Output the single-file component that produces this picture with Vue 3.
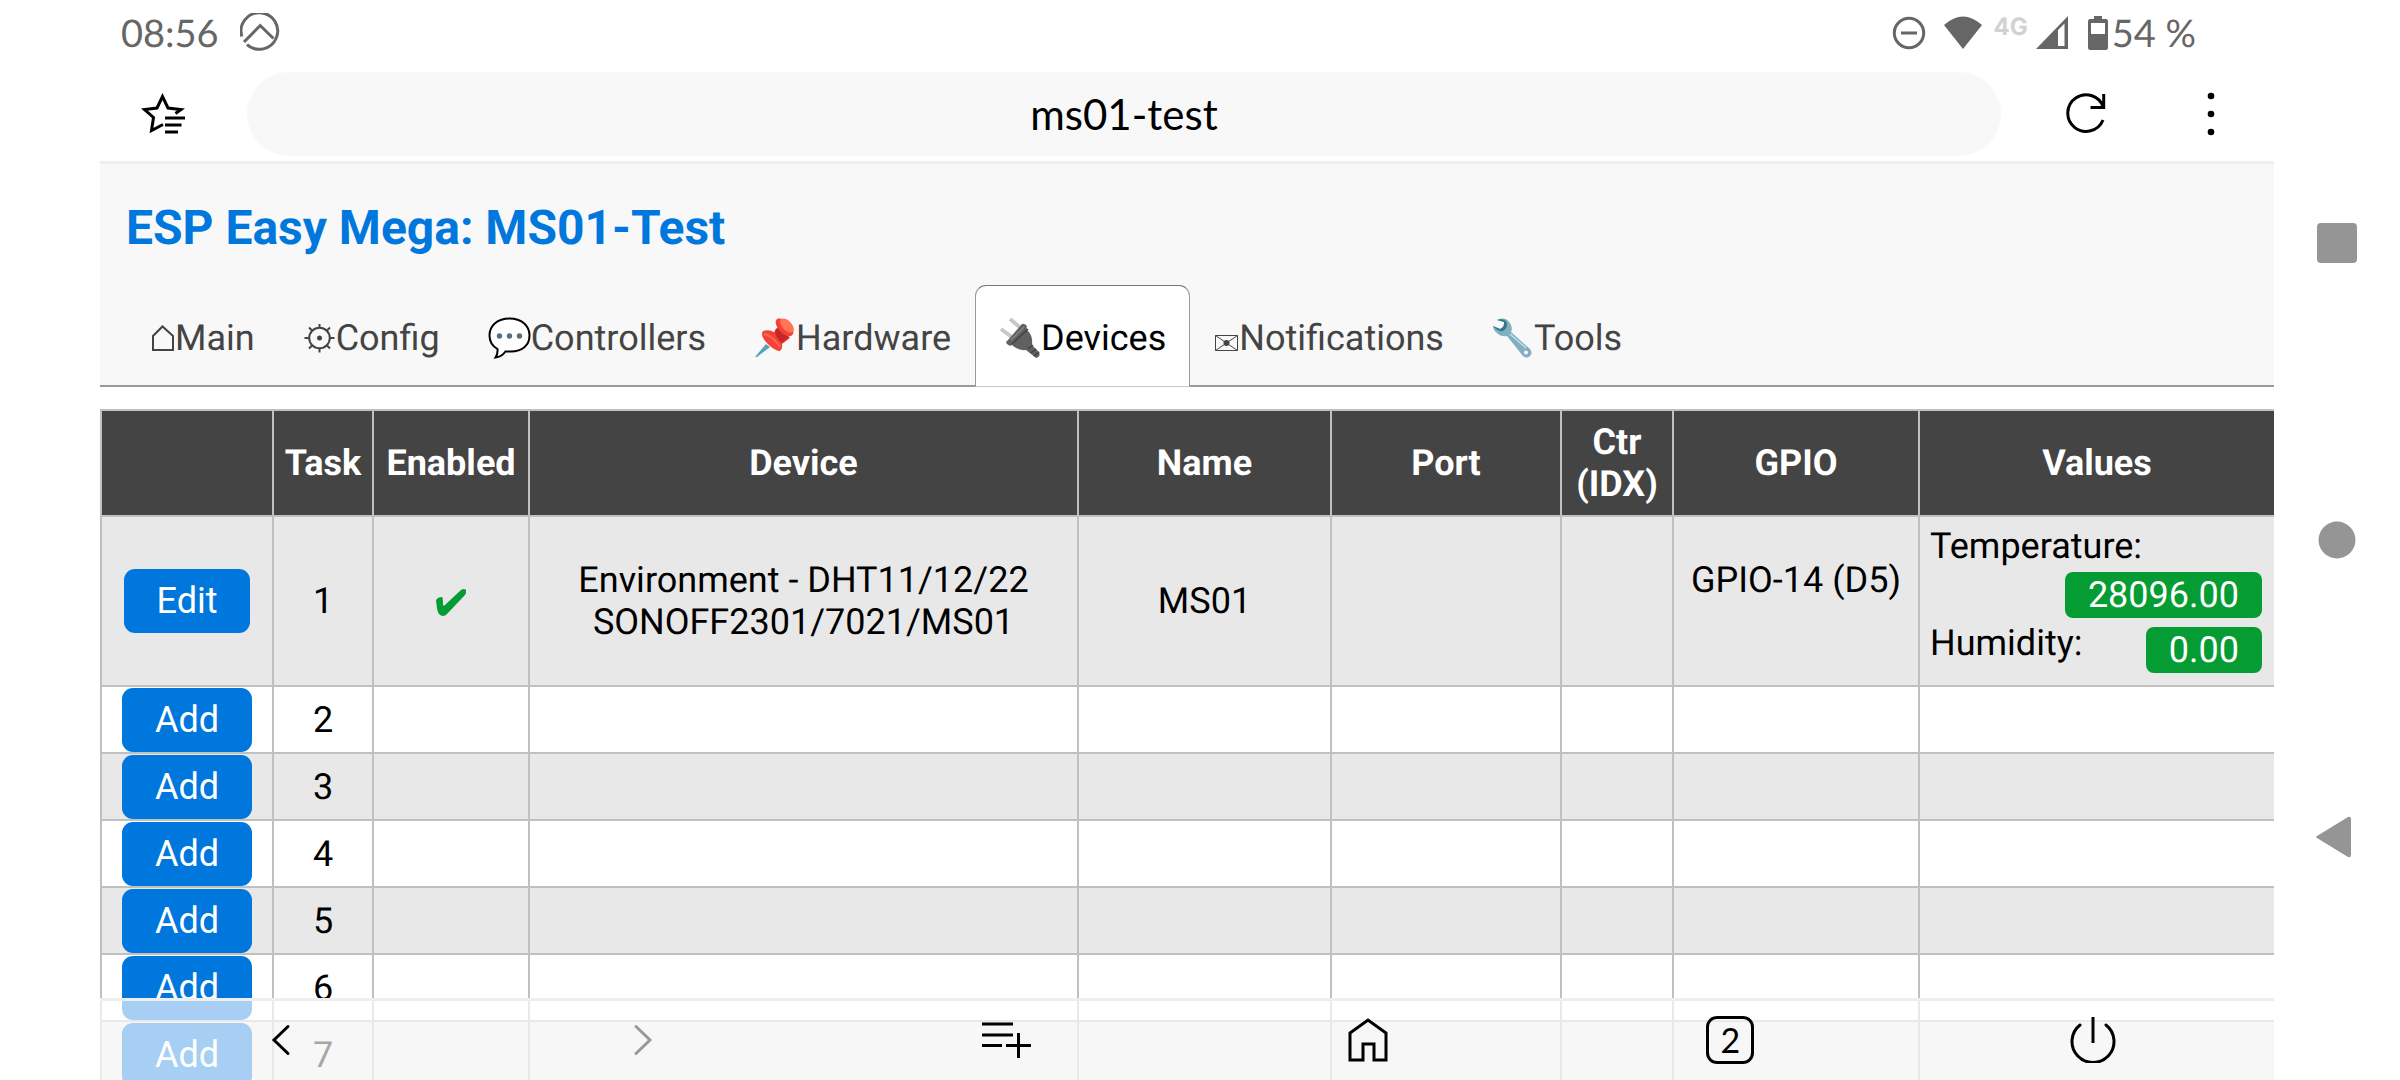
<script setup>
import { ref } from 'vue'

const address = ref('ms01-test')

const tabs = [
  { label: 'Main', icon: 'main' },
  { label: 'Config', icon: 'config' },
  { label: 'Controllers', icon: 'controllers' },
  { label: 'Hardware', icon: 'hardware' },
  { label: 'Devices', icon: 'devices', active: true },
  { label: 'Notifications', icon: 'notifications' },
  { label: 'Tools', icon: 'tools' },
]

const readings = [
  { name: 'Temperature:', value: '28096.00' },
  { name: 'Humidity:', value: '0.00' },
]

const emptyTasks = [2, 3, 4, 5, 6, 7]
</script>

<template>
  <div class="phone">
    <div class="screen">
      <div class="status">
        <span class="clock">08:56</span>
        <svg class="app-badge" width="40" height="40" viewBox="0 0 40 40" fill="none" stroke="#666" stroke-width="3">
          <path d="M1.900 24.500A18.300 18.300 0 1 1 7 32.500M4 30L20.200 13.500L33.500 26.500" transform="translate(0 -1)" />
        </svg>
        <div class="status-right">
          <svg class="dnd" width="34" height="34" viewBox="0 0 34 34" fill="none" stroke="#666" stroke-width="3">
            <circle cx="17" cy="17" r="14.700" /><path d="M9 17H25" />
          </svg>
          <svg class="wifi" width="38" height="34" viewBox="0 0 38 34" fill="#666">
            <path d="M0 9Q19 -8 38 9L19 33Z" />
          </svg>
          <span class="network">4G</span>
          <svg class="signal" width="32" height="34" viewBox="0 0 32 34" fill="#666">
            <path fill-rule="evenodd" d="M0 33L32 0V33ZM22 14V30H28.500V7.500Z" />
          </svg>
          <svg class="battery" width="20" height="34" viewBox="0 0 20 34" fill="#666">
            <path fill-rule="evenodd" d="M6 0H14V3H18Q20 3 20 6V31Q20 34 18 34H2Q0 34 0 31V6Q0 3 2 3H6ZM3 7V18H17V7Z" />
          </svg>
          <span class="percent">54 %</span>
        </div>
      </div>

      <div class="toolbar">
        <button class="tool star" aria-label="Bookmarks">
          <svg width="48" height="42" viewBox="0 0 48 42" fill="none" stroke="#000" stroke-width="3">
            <path d="M24 31.500L12.500 37.500L14.500 24.500L5.500 16.500L18 15L23.500 3.500L29 15L42 16.500L36.500 20.500" />
            <path d="M26 25H46M26 32H42.500M26 39H39" />
          </svg>
        </button>
        <input v-model="address" class="address" type="text" aria-label="Address">
        <button class="tool reload" aria-label="Reload">
          <svg width="40" height="42" viewBox="0 0 40 42" fill="none" stroke="#000" stroke-width="3">
            <path d="M37.500 14.500A18.300 18.300 0 1 0 37 27M37.700 1V14.500H24.500" />
          </svg>
        </button>
        <button class="tool more" aria-label="Menu">
          <svg width="8" height="44" viewBox="0 0 8 44">
            <circle cx="4" cy="4" r="3.300" /><circle cx="4" cy="22" r="3.300" /><circle cx="4" cy="40" r="3.300" />
          </svg>
        </button>
      </div>

      <header class="head">
        <h1>ESP Easy Mega: MS01-Test</h1>
        <nav class="tabs">
          <a v-for="tab in tabs" :key="tab.label" href="#" class="tab" :class="{ active: tab.active }">
            <svg v-if="tab.icon === 'main'" width="26" height="42" viewBox="0 0 26 42" fill="none" stroke="#444" stroke-width="2">
              <path d="M4 33V19L13.500 9.500L24 19V33Z" />
            </svg>
            <svg v-else-if="tab.icon === 'config'" width="33" height="42" viewBox="0 0 33 42" fill="none" stroke="#444" stroke-width="2">
              <circle cx="16.500" cy="21" r="10.300" /><circle cx="16.500" cy="21" r="2.500" fill="#444" stroke="none" />
              <path d="M16.500 11V7M16.500 31V35.500M6 21H1.500M27 21H31.500M9 13.500L6 10.500M24 13.500L27 10.500M9 28.500L6 31.500M24 28.500L27 31.500" />
            </svg>
            <svg v-else-if="tab.icon === 'controllers'" width="43" height="42" viewBox="0 0 43 42">
              <path d="M21.500 1.500C33.500 1.500 41.500 8.500 41.500 18.500C41.500 28.500 34 34.500 23 34.500Q19 34.500 17.500 34.500Q13.500 40 7.500 40.500Q10 37 9.500 32Q1.500 27.500 1.500 18.500C1.500 8.500 9.500 1.500 21.500 1.500Z" fill="#fff" stroke="#000" stroke-width="2" />
              <g fill="#546e7a"><circle cx="11.500" cy="19" r="2.700" /><circle cx="21.500" cy="19" r="2.700" /><circle cx="31.500" cy="19" r="2.700" /></g>
            </svg>
            <svg v-else-if="tab.icon === 'hardware'" width="42" height="42" viewBox="0 0 42 42">
              <path d="M12 27L1 40L3 40L16 30Z" fill="#5aa0ba" />
              <path d="M9 14Q15 12 20 15L25 10L36 21L28 27Q29 31 26 34C22 35 8 24 8 17Q8 15 9 14Z" fill="#f44336" />
              <path d="M21 13L26 8L35 20L28 26Q21 21 21 13Z" fill="#c62828" />
              <path d="M23 2C29 -1 42 11 39 17Q37 21 31 18C25 15 19 6 23 2Z" fill="#f44336" />
              <ellipse cx="33" cy="8.500" rx="8.500" ry="4.700" transform="rotate(46 33 8.500)" fill="#ff7555" />
              <path d="M10 17Q18 18 26 30" fill="none" stroke="#ff6b50" stroke-width="2" />
            </svg>
            <svg v-else-if="tab.icon === 'devices'" width="42" height="42" viewBox="0 0 42 42">
              <path d="M2 12L14 21M11 2L23 12" stroke="#c8c8c8" stroke-width="4" />
              <path d="M23 7Q25 6 28 9Q27 11 29 14Q34 19 33 28L40 35Q42 40 37 41L27 33Q19 34 13 28Q11 30 8 27Q6 25 9 23Z" fill="#616161" />
              <path d="M13 27L29 12M29 32L34 28M32 36L37 32M35 39L40 35" fill="none" stroke="#424242" stroke-width="1.500" />
              <path d="M12 23L25 10" stroke="#858585" stroke-width="1.500" />
            </svg>
            <svg v-else-if="tab.icon === 'notifications'" width="25" height="42" viewBox="0 0 25 42" fill="none" stroke="#444" stroke-width="1">
              <path d="M1.500 18.500H23.500V33.500H1.500ZM1.500 18.500L12.500 26L23.500 18.500M1.500 33.500L12.500 26L23.500 33.500" />
              <circle cx="12.500" cy="26" r="3" fill="#444" stroke="none" />
            </svg>
            <svg v-else width="42" height="42" viewBox="0 0 42 42">
              <path fill-rule="evenodd" d="M5 3Q13 -1 18 6Q21 11 19 15L38 32Q41 36 38 39Q35 42 31 39L15 19Q9 20 5 16Q1 13 1 9L8 12Q12 11 12 5ZM34 33.500A2 2 0 1 0 34 37.500A2 2 0 1 0 34 33.500Z" fill="#82aec0" />
              <path d="M5 3Q10 1 14 4Q17 10 11 14Q6 15 1 9L8 12Q13 10 12 5Z" fill="#2f7889" />
              <path d="M18 17L34 31" stroke="#b9e4ea" stroke-width="1.500" />
            </svg>
            <span>{{ tab.label }}</span>
          </a>
        </nav>
      </header>

      <main>
        <table class="tasks">
          <colgroup>
            <col class="c-action"><col class="c-task"><col class="c-enabled"><col><col class="c-name"><col class="c-port"><col class="c-ctr"><col class="c-gpio"><col class="c-values">
          </colgroup>
          <thead>
            <tr>
              <th></th><th>Task</th><th>Enabled</th><th>Device</th><th>Name</th><th>Port</th><th>Ctr<br>(IDX)</th><th>GPIO</th><th>Values</th>
            </tr>
          </thead>
          <tbody>
            <tr class="filled">
              <td><button class="btn">Edit</button></td>
              <td>1</td>
              <td>
                <svg class="check" width="30" height="28" viewBox="0 0 30 28" fill="#059c33">
                  <path d="M0 11Q2 8 6 8Q7 8 7 16Q8 18 10 15L25 1Q28 -1 30 1Q31 4 28 7L11 25Q7 29 3 25Q1 23 0 11Z" />
                </svg>
              </td>
              <td>Environment - DHT11/12/22<br>SONOFF2301/7021/MS01</td>
              <td>MS01</td>
              <td></td>
              <td></td>
              <td>GPIO-14 (D5)<br>&nbsp;</td>
              <td class="values">
                <div v-for="reading in readings" :key="reading.name" class="reading">
                  <span>{{ reading.name }}</span>
                  <span class="badge">{{ reading.value }}</span>
                </div>
              </td>
            </tr>
            <tr v-for="task in emptyTasks" :key="task">
              <td><button class="btn">Add</button></td>
              <td>{{ task }}</td>
              <td></td><td></td><td></td><td></td><td></td><td></td><td></td>
            </tr>
          </tbody>
        </table>
      </main>

      <div class="bottom-bar">
        <button aria-label="Back">
          <svg width="20" height="32" viewBox="0 0 20 32" fill="none" stroke="#000" stroke-width="3" stroke-linecap="round"><path d="M17 2.500L3 16L17 29.500" /></svg>
        </button>
        <button aria-label="Forward">
          <svg width="20" height="32" viewBox="0 0 20 32" fill="none" stroke="#999" stroke-width="3" stroke-linecap="round"><path d="M3 2.500L17 16L3 29.500" /></svg>
        </button>
        <button aria-label="Add to list">
          <svg width="50" height="38" viewBox="0 0 50 38" fill="none" stroke="#000" stroke-width="3"><path d="M1 3H32M1 14H32M1 24.500H21M25 24.500H50M37.500 12V37" /></svg>
        </button>
        <button aria-label="Home">
          <svg width="42" height="46" viewBox="0 0 42 46" fill="none" stroke="#000" stroke-width="3"><path d="M3 43V16L21 3L39 16V43H27V27H16V43Z" /></svg>
        </button>
        <button aria-label="Open tabs"><span class="tab-count">2</span></button>
        <button aria-label="Exit">
          <svg width="46" height="46" viewBox="0 0 46 46" fill="none" stroke="#000" stroke-width="3" stroke-linecap="round"><path d="M10 8A21 21 0 1 0 36 8" /><path stroke-linecap="butt" d="M23 0V26" /></svg>
        </button>
      </div>
    </div>

    <div class="system-nav">
      <button aria-label="Recent apps"><svg width="40" height="40"><rect width="40" height="40" rx="4" fill="#959595" /></svg></button>
      <button aria-label="Home screen"><svg width="38" height="38"><circle cx="19" cy="19" r="18.500" fill="#959595" /></svg></button>
      <button aria-label="System back"><svg width="42" height="42" viewBox="0 0 42 42"><path d="M3 20L34 1Q37 0 37 3V39Q37 42 34 41L3 22Q1 21 3 20Z" transform="translate(-2 0)" fill="#959595" /></svg></button>
    </div>
  </div>
</template>

<style>
body {
  margin: 0;
  background: #fff;
}
</style>

<style scoped>
* {
  box-sizing: border-box;
}
button {
  padding: 0;
  border: 0;
  background: none;
  font: inherit;
}
svg {
  display: block;
  flex: none;
}
.phone {
  display: flex;
  height: 100vh;
  overflow: hidden;
  padding-left: 100px;
  font: 36px/42px Roboto, sans-serif;
  text-rendering: geometricPrecision;
  color: #000;
}
.screen {
  position: relative;
  flex: 1;
  min-width: 0;
  overflow: hidden;
}
.status {
  display: flex;
  align-items: center;
  height: 66px;
  padding: 0 78px 0 21px;
  font-family: Lato, sans-serif;
  font-size: 38px;
  color: #666;
}
.app-badge {
  margin-left: 21px;
}
.status-right {
  display: flex;
  align-items: center;
  margin-left: auto;
}
.wifi {
  margin-left: 18px;
}
.network {
  align-self: flex-start;
  margin-left: 11px;
  font: 700 24px/30px Inter, sans-serif;
  color: #d2d2d2;
}
.signal {
  margin-left: 8px;
}
.battery {
  margin: 0 4px 0 20px;
}
.toolbar {
  display: flex;
  align-items: center;
  height: 98px;
  padding: 0 59px 0 39px;
  border-bottom: 3px solid #eee;
}
.address {
  flex: 1;
  min-width: 0;
  height: 84px;
  margin: 0 65px 0 60px;
  padding: 0 40px;
  border: 0;
  border-radius: 42px;
  background: #f8f8f8;
  text-align: center;
  font: 42px/50px Lato, sans-serif;
  color: #000;
}
.more {
  margin-left: 101px;
}
.head {
  padding-top: 36px;
  background: #f8f8f8;
}
h1 {
  margin: 0 0 29px;
  padding-left: 26px;
  font-size: 48px;
  line-height: 56px;
  font-weight: 700;
  color: #0077dd;
}
.tabs {
  display: flex;
  padding-left: 25px;
  border-bottom: 2px solid #999;
}
.tab {
  display: flex;
  padding: 31px 23px 27px;
  margin-bottom: -2px;
  border: 1px solid transparent;
  border-radius: 11px 11px 0 0;
  color: #444;
  text-decoration: none;
}
.tab.active {
  background: #fff;
  border-color: #777 #999 #c8c8c8;
  color: #000;
}
main {
  padding-top: 22px;
}
.tasks {
  width: 100%;
  table-layout: fixed;
  border-collapse: collapse;
}
.c-action { width: 172px; }
.c-task { width: 100px; }
.c-enabled { width: 156px; }
.c-name { width: 253px; }
.c-port { width: 230px; }
.c-ctr { width: 112px; }
.c-gpio { width: 246px; }
.c-values { width: 355px; }
th,
td {
  height: 67px;
  padding: 0;
  border: 2px solid #c0c0c0;
  text-align: center;
  vertical-align: middle;
}
th {
  height: 106px;
  background: #444;
  color: #fff;
  font-weight: 700;
}
th:last-child,
td:last-child {
  border-right: 0;
}
tbody tr:nth-child(odd) {
  background: #e8e8e8;
}
.filled td {
  height: 170px;
}
.check {
  margin: 4px auto 0;
}
.btn {
  display: block;
  height: 64px;
  margin: 0 auto;
  padding: 0 33px;
  border-radius: 11px;
  background: #0077dd;
  color: #fff;
}
.filled .values {
  padding: 8px 12px 4px 10px;
  vertical-align: top;
}
.reading {
  display: flex;
  flex-wrap: wrap;
  justify-content: space-between;
}
.badge {
  margin: 5px 0 4px auto;
  padding: 2px 23px;
  border-radius: 8px;
  background: #059c33;
  color: #fff;
}
.bottom-bar {
  position: absolute;
  inset: auto 0 0;
  display: grid;
  grid-template-columns: repeat(6, 1fr);
  height: 82px;
  padding-bottom: 2px;
  border-top: 3px solid #eee;
  background: rgba(255, 255, 255, 0.65);
  background-clip: padding-box;
}
.bottom-bar button,
.system-nav button {
  display: flex;
  align-items: center;
  justify-content: center;
}
.tab-count {
  width: 48px;
  height: 48px;
  border: 3px solid #000;
  border-radius: 11px;
  font: 34px/42px Lato, sans-serif;
  text-align: center;
}
.system-nav {
  display: flex;
  flex-direction: column;
  justify-content: center;
  gap: 217px;
  width: 126px;
}
.system-nav button {
  height: 80px;
}
</style>
